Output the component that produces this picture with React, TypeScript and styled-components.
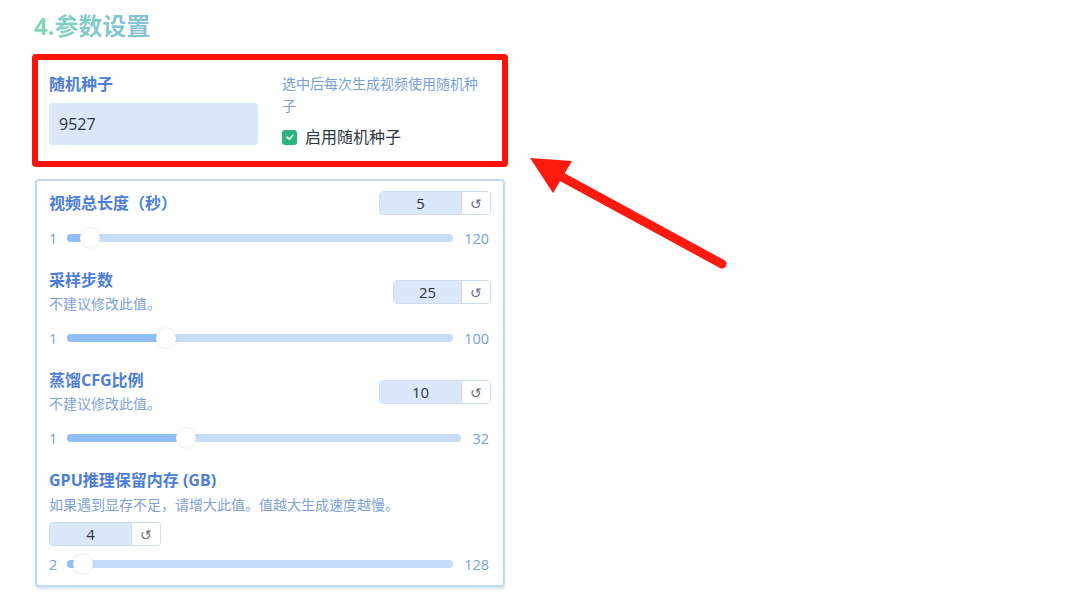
import styled, { createGlobalStyle } from "styled-components";

const GlobalStyle = createGlobalStyle`
  html, body {
    margin: 0;
    padding: 0;
    background: #ffffff;
    font-family: "Open Sans", "Noto Sans CJK SC", sans-serif;
  }
`;

type Param = {
  title: string;
  hint?: string;
  value: number;
  min: number;
  max: number;
  boxWidth: number;
  wrap?: boolean;
};

const params: Param[] = [
  { title: "视频总长度（秒）", value: 5, min: 1, max: 120, boxWidth: 81 },
  { title: "采样步数", hint: "不建议修改此值。", value: 25, min: 1, max: 100, boxWidth: 67 },
  { title: "蒸馏CFG比例", hint: "不建议修改此值。", value: 10, min: 1, max: 32, boxWidth: 81 },
  {
    title: "GPU推理保留内存 (GB)",
    hint: "如果遇到显存不足，请增大此值。值越大生成速度越慢。",
    value: 4,
    min: 2,
    max: 128,
    boxWidth: 81,
    wrap: true,
  },
];

const THUMB = 20;

const Slider = ({ value, min, max }: { value: number; min: number; max: number }) => {
  const f = (value - min) / (max - min);
  return (
    <SliderRow>
      <MinLabel>{min}</MinLabel>
      <Track>
        <Fill style={{ width: `calc(${f} * (100% - ${THUMB}px) + ${THUMB / 2}px)` }} />
        <Thumb style={{ left: `calc(${f} * (100% - ${THUMB}px))` }} />
      </Track>
      <MaxLabel>{max}</MaxLabel>
    </SliderRow>
  );
};

const NumberBox = ({ value, width }: { value: number; width: number }) => (
  <NumWrap>
    <NumValue $w={width}>{value}</NumValue>
    <ResetBtn>↺</ResetBtn>
  </NumWrap>
);

const App = () => {
  return (
    <>
      <GlobalStyle />
      <Page>
        <Column>
          <Title>4.参数设置</Title>

          <Highlight>
            <SeedLeft>
              <Label>随机种子</Label>
              <SeedInput>9527</SeedInput>
            </SeedLeft>
            <SeedRight>
              <Info>选中后每次生成视频使用随机种子</Info>
              <CheckRow>
                <CheckBox>
                  <svg width="10" height="10" viewBox="0 0 10 10">
                    <path d="M2 5.2 L4.2 7.2 L8 3" stroke="#fff" strokeWidth="1.6" fill="none" strokeLinecap="round" strokeLinejoin="round" />
                  </svg>
                </CheckBox>
                <CheckText>启用随机种子</CheckText>
              </CheckRow>
            </SeedRight>
          </Highlight>

          <Panel>
            {params.map((p) => (
              <Block key={p.title} $wrap={!!p.wrap}>
                <Header $wrap={!!p.wrap}>
                  <HeadText $wrap={!!p.wrap}>
                    <Label>{p.title}</Label>
                    {p.hint && <Hint>{p.hint}</Hint>}
                  </HeadText>
                  <NumberBox value={p.value} width={p.boxWidth} />
                </Header>
                <Slider value={p.value} min={p.min} max={p.max} />
              </Block>
            ))}
          </Panel>
        </Column>

        <Arrow width="220" height="130" viewBox="0 0 220 130">
          <line x1="200" y1="114" x2="40" y2="27" stroke="#ff1a10" strokeWidth="9" strokeLinecap="round" />
          <polygon points="8,8 50,11 31,43" fill="#ff1a10" />
        </Arrow>
      </Page>
    </>
  );
};

const Page = styled.div`
position: relative;
width: 1065px;
height: 600px;
overflow: hidden;
padding: 10px 0 0 32px;
box-sizing: border-box;
`;

const Column = styled.div`
width: 476px;
display: flex;
flex-direction: column;
`;

const Title = styled.h2`
margin: 0 0 0 2px;
font-size: 24px;
line-height: 32px;
font-weight: 700;
background: linear-gradient(90deg, #80d6b4 0%, #86bfe0 100%);
-webkit-background-clip: text;
background-clip: text;
color: transparent;
width: max-content;
`;

const Highlight = styled.div`
margin-top: 12px;
border: 6px solid #ff1208;
border-radius: 4px;
background: #ffffff;
padding: 13px 12px 13px 11px;
display: flex;
gap: 24px;
`;

const SeedLeft = styled.div`
width: 209px;
display: flex;
flex-direction: column;
gap: 8px;
`;

const Label = styled.div`
font-size: 16px;
line-height: 22px;
font-weight: 700;
color: #4d7ed5;
`;

const SeedInput = styled.div`
height: 42px;
background: #dbe8fb;
border-radius: 3px;
display: flex;
align-items: center;
padding-left: 10px;
font-size: 16px;
color: #2c3440;
`;

const SeedRight = styled.div`
flex: 1;
display: flex;
flex-direction: column;
`;

const Info = styled.div`
font-size: 14px;
line-height: 22px;
color: #7a9fd6;
padding-right: 8px;
`;

const CheckRow = styled.div`
margin-top: 9px;
display: flex;
align-items: center;
gap: 8px;
`;

const CheckBox = styled.span`
width: 15px;
height: 15px;
border-radius: 3px;
background: #2bb27e;
display: flex;
align-items: center;
justify-content: center;
`;

const CheckText = styled.span`
font-size: 16px;
line-height: 22px;
color: #2f3642;
`;

const Panel = styled.div`
margin: 12px 3px 0;
border: 2px solid #c4d9f4;
border-radius: 4px;
box-shadow: 0 2px 3px rgba(160, 190, 230, 0.45);
padding: 10px 12px 11px 12px;
display: flex;
flex-direction: column;
gap: 21px;
`;

const Block = styled.div<{ $wrap: boolean }>`
display: flex;
flex-direction: column;
gap: ${(p) => (p.$wrap ? "8px" : "13px")};
`;

const Header = styled.div<{ $wrap: boolean }>`
display: flex;
flex-direction: ${(p) => (p.$wrap ? "column" : "row")};
justify-content: space-between;
align-items: ${(p) => (p.$wrap ? "flex-start" : "center")};
gap: ${(p) => (p.$wrap ? "6px" : "12px")};
`;

const HeadText = styled.div<{ $wrap: boolean }>`
display: flex;
flex-direction: column;
gap: ${(p) => (p.$wrap ? "3px" : "2px")};
`;

const Hint = styled.div`
font-size: 14px;
line-height: 22px;
color: #7ea2d8;
`;

const NumWrap = styled.div`
display: flex;
height: 22px;
border: 1px solid #cfdcee;
border-radius: 4px;
overflow: hidden;
flex-shrink: 0;
`;

const NumValue = styled.div<{ $w: number }>`
width: ${(p) => p.$w}px;
background: #dbe8fb;
display: flex;
align-items: center;
justify-content: center;
font-size: 15px;
color: #2c3440;
`;

const ResetBtn = styled.div`
width: 28px;
border-left: 1px solid #cfdcee;
background: #ffffff;
display: flex;
align-items: center;
justify-content: center;
font-size: 14px;
color: #6a7280;
`;

const SliderRow = styled.div`
height: 20px;
display: flex;
align-items: center;
margin-right: 2px;
`;

const MinLabel = styled.span`
font-size: 14.5px;
color: #7aa3d8;
margin-right: 10px;
`;

const MaxLabel = styled.span`
font-size: 14.5px;
color: #7aa3d8;
margin-left: 11px;
`;

const Track = styled.div`
position: relative;
flex: 1;
height: 8px;
border-radius: 4px;
background: #c6ddf9;
`;

const Fill = styled.div`
height: 100%;
border-radius: 4px;
background: #8fc0f5;
`;

const Thumb = styled.div`
position: absolute;
top: 50%;
width: ${THUMB}px;
height: ${THUMB}px;
transform: translateY(-50%);
border-radius: 50%;
background: #ffffff;
box-shadow: 0 0 2px rgba(120, 150, 200, 0.35);
`;

const Arrow = styled.svg`
position: absolute;
left: 522px;
top: 150px;
`;

export default App;
